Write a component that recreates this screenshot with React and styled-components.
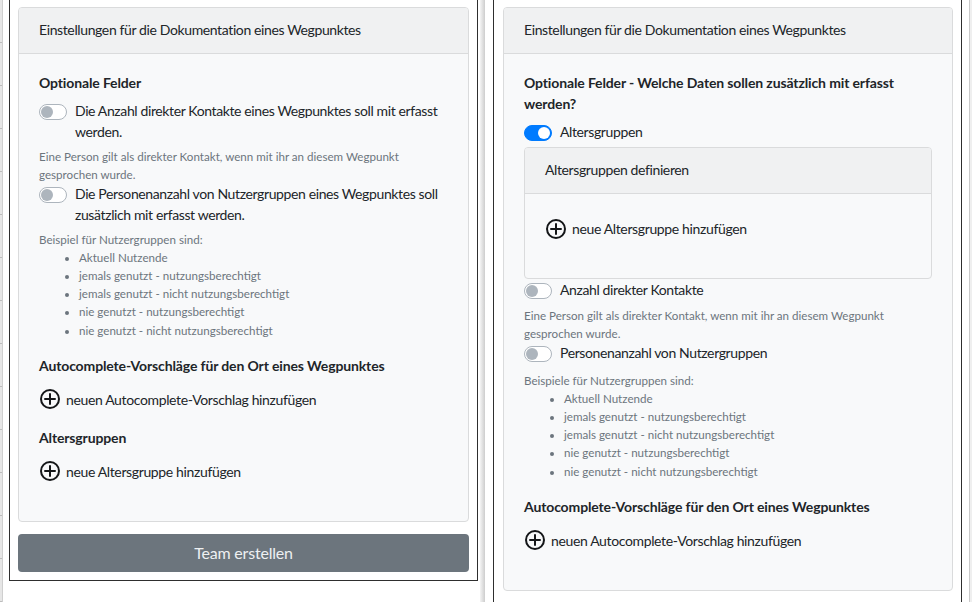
import React from "react";
import styled, { createGlobalStyle } from "styled-components";

const GlobalStyle = createGlobalStyle`
  html, body {
    margin: 0;
    padding: 0;
    background: #fff;
  }
  body {
    font-family: Lato, "Open Sans", sans-serif;
    color: #212529;
  }
`;

const userGroups = [
  "Aktuell Nutzende",
  "jemals genutzt - nutzungsberechtigt",
  "jemals genutzt - nicht nutzungsberechtigt",
  "nie genutzt - nutzungsberechtigt",
  "nie genutzt - nicht nutzungsberechtigt",
];

function PlusIcon() {
  return (
    <Icon viewBox="0 0 22 22" fill="none" stroke="#141618" strokeWidth="2" strokeLinecap="round">
      <circle cx="11" cy="11" r="9" />
      <path d="M11 6v10M6 11h10" />
    </Icon>
  );
}

function Switch({ on, children }) {
  return (
    <SwitchRow>
      <Track $on={on}>
        <Knob $on={on} />
      </Track>
      <SwitchLabel>{children}</SwitchLabel>
    </SwitchRow>
  );
}

function GroupHint({ title, gap }) {
  return (
    <Hint $gap={gap}>
      {title}
      <HintList>
        {userGroups.map((g) => (
          <li key={g}>{g}</li>
        ))}
      </HintList>
    </Hint>
  );
}

function App() {
  return (
    <Page>
      <GlobalStyle />
      <LeftEdge />
      <Frame $closed>
        <Card>
          <CardHeader>Einstellungen für die Dokumentation eines Wegpunktes</CardHeader>
          <CardBody>
            <Heading>Optionale Felder</Heading>
            <Switch>Die Anzahl direkter Kontakte eines Wegpunktes soll mit erfasst werden.</Switch>
            <Hint>Eine Person gilt als direkter Kontakt, wenn mit ihr an diesem Wegpunkt gesprochen wurde.</Hint>
            <Switch>Die Personenanzahl von Nutzergruppen eines Wegpunktes soll zusätzlich mit erfasst werden.</Switch>
            <GroupHint title="Beispiel für Nutzergruppen sind:" />
            <Heading $gap={13}>Autocomplete-Vorschläge für den Ort eines Wegpunktes</Heading>
            <AddRow>
              <PlusIcon />
              neuen Autocomplete-Vorschlag hinzufügen
            </AddRow>
            <Heading $gap={13}>Altersgruppen</Heading>
            <AddRow>
              <PlusIcon />
              neue Altersgruppe hinzufügen
            </AddRow>
          </CardBody>
        </Card>
        <SubmitButton type="button">Team erstellen</SubmitButton>
      </Frame>
      <Divider />
      <Frame>
        <Card>
          <CardHeader>Einstellungen für die Dokumentation eines Wegpunktes</CardHeader>
          <CardBody>
            <Heading>Optionale Felder - Welche Daten sollen zusätzlich mit erfasst werden?</Heading>
            <Switch on>Altersgruppen</Switch>
            <InnerCard>
              <CardHeader>Altersgruppen definieren</CardHeader>
              <InnerBody>
                <AddRow>
                  <PlusIcon />
                  neue Altersgruppe hinzufügen
                </AddRow>
              </InnerBody>
            </InnerCard>
            <Switch>Anzahl direkter Kontakte</Switch>
            <Hint $gap={7}>Eine Person gilt als direkter Kontakt, wenn mit ihr an diesem Wegpunkt gesprochen wurde.</Hint>
            <Switch>Personenanzahl von Nutzergruppen</Switch>
            <GroupHint title="Beispiele für Nutzergruppen sind:" gap={9} />
            <Heading $gap={13}>Autocomplete-Vorschläge für den Ort eines Wegpunktes</Heading>
            <AddRow>
              <PlusIcon />
              neuen Autocomplete-Vorschlag hinzufügen
            </AddRow>
          </CardBody>
        </Card>
      </Frame>
      <RightEdge />
    </Page>
  );
}

export default App;

//Styles

const Page = styled.div`
  display: flex;
  align-items: flex-start;
  height: 602px;
  overflow: hidden;
  background: #fff;
`;

const LeftEdge = styled.div`
  flex: none;
  width: 3px;
  height: 602px;
  margin-right: 6px;
  background: repeating-linear-gradient(180deg, #e6e6e6 0 42px, #bdbdbd 42px 43px);
  border-right: 1px solid #cfcfcf;
  box-sizing: border-box;
`;

const Frame = styled.div`
  flex: none;
  width: 469px;
  box-sizing: border-box;
  min-height: ${(p) => (p.$closed ? "0" : "602px")};
  padding: 7px 8px ${(p) => (p.$closed ? "8px" : "0")} ${(p) => (p.$closed ? "8px" : "9px")};
  border: 1px solid #2e2e2e;
  border-top: none;
  border-bottom: ${(p) => (p.$closed ? "1px solid #2e2e2e" : "none")};
`;

const Divider = styled.div`
  flex: none;
  width: 15px;
  height: 602px;
  background: linear-gradient(90deg, #fff 0 2px, #f4f4f4 2px, #cdcdcd 7px, #fff 7px);
`;

const RightEdge = styled.div`
  flex: none;
  width: 10px;
  height: 602px;
  background: linear-gradient(90deg, #fff 0 7px, #c9c9c9 7px 8px, #efefef 8px);
`;

const Card = styled.div`
  background: #f8f9fa;
  border: 1px solid #dadbdc;
  border-radius: 4px;
  overflow: hidden;
`;

const CardHeader = styled.div`
  padding: 11px 20px 13px;
  background: #f0f1f2;
  border-bottom: 1px solid #dadbdc;
  font-size: 14px;
  line-height: 21px;
  letter-spacing: -0.38px;
  color: #212529;
`;

const CardBody = styled.div`
  padding: 18px 20px 22px;
`;

const InnerCard = styled(Card)`
  margin-top: 5px;
`;

const InnerBody = styled.div`
  padding: 24px 20px 22px;
`;

const Heading = styled.div`
  margin-bottom: ${(p) => p.$gap || 7}px;
  font-size: 14px;
  line-height: 21px;
  font-weight: 700;
  letter-spacing: -0.13px;
  color: #212529;
`;

const SwitchRow = styled.label`
  display: flex;
  align-items: flex-start;
  font-size: 14px;
  line-height: 21px;
  letter-spacing: -0.38px;
`;

const Track = styled.span`
  position: relative;
  flex: none;
  width: 28px;
  height: 16px;
  margin: 4px 8px 0 0;
  box-sizing: border-box;
  border-radius: 8px;
  border: 1px solid ${(p) => (p.$on ? "#007bff" : "#adb5bd")};
  background: ${(p) => (p.$on ? "#007bff" : "#fff")};
`;

const Knob = styled.span`
  position: absolute;
  top: 1px;
  left: ${(p) => (p.$on ? "13px" : "1px")};
  width: 12px;
  height: 12px;
  border-radius: 50%;
  background: ${(p) => (p.$on ? "#fff" : "#adb5bd")};
`;

const SwitchLabel = styled.span`
  color: #212529;
`;

const Hint = styled.div`
  margin-top: ${(p) => p.$gap || 6}px;
  font-size: 11.6px;
  line-height: 17.5px;
  color: #6c757d;
`;

const HintList = styled.ul`
  margin: 0 0 15px;
  padding-left: 40px;

  li {
    line-height: 18.25px;
  }
`;

const AddRow = styled.div`
  display: flex;
  align-items: center;
  height: 21px;
  margin-bottom: 17px;
  font-size: 14px;
  line-height: 21px;
  letter-spacing: -0.36px;
  color: #212529;
`;

const Icon = styled.svg`
  flex: none;
  width: 22px;
  height: 22px;
  margin-right: 5px;
`;

const SubmitButton = styled.button`
  display: block;
  width: 100%;
  height: 38px;
  margin-top: 12px;
  border: none;
  border-radius: 4px;
  background: #6c757d;
  color: #eef0f2;
  font-family: Lato, "Open Sans", sans-serif;
  font-size: 16px;
  letter-spacing: -0.2px;
`;
